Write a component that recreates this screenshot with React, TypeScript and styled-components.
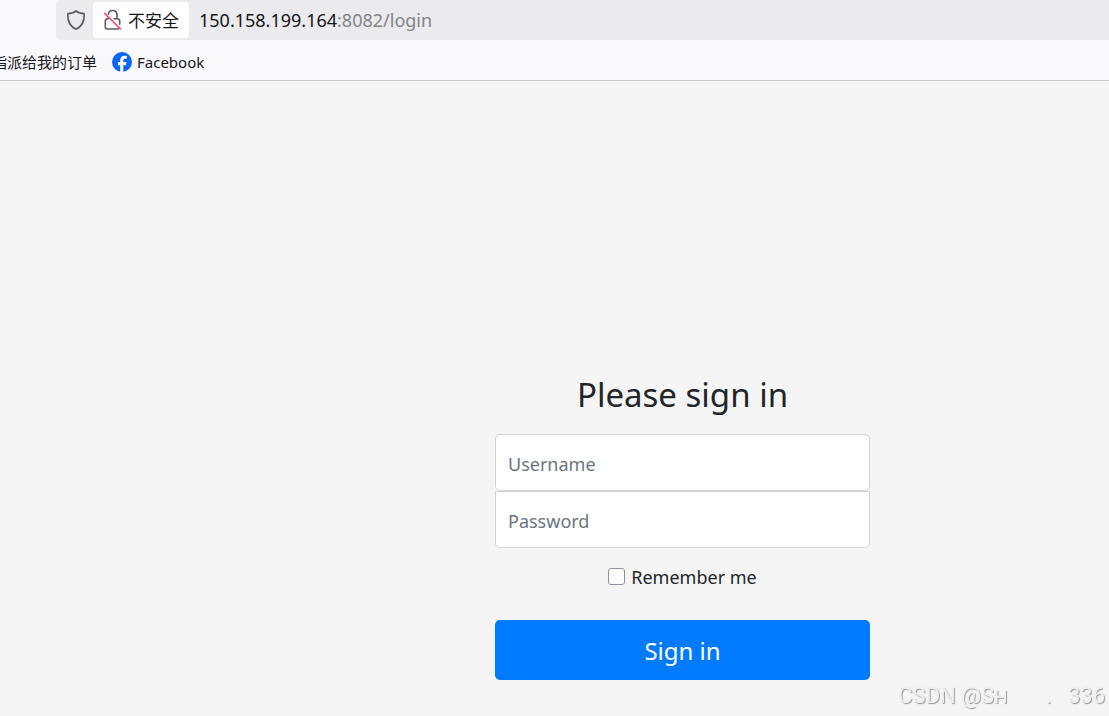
import React from "react";
import styled, { createGlobalStyle } from "styled-components";

const GlobalStyle = createGlobalStyle`
  *, *::before, *::after { box-sizing: border-box; }
  body {
    margin: 0;
    background: #f5f5f5;
    color: #212529;
    font-family: "Noto Sans", "Noto Sans CJK SC", sans-serif;
  }
`;

const Browser = styled.div`
  display: flex;
  flex-direction: column;
  min-height: 100vh;
  overflow: hidden;
`;

const Chrome = styled.header`
  background: #f9f9fb;
  border-bottom: 1px solid #cacaca;
  color: #15141a;
`;

const AddressBar = styled.div`
  display: flex;
  align-items: center;
  height: 40px;
  margin-left: 56px;
  padding-left: 10px;
  background: #ebebed;
  border-radius: 5px 0 0 5px;
`;

const SecurityButton = styled.button`
  display: flex;
  align-items: center;
  gap: 6px;
  height: 36px;
  margin-left: 7px;
  padding: 0 10px;
  border: 0;
  border-radius: 4px;
  background: #fff;
  color: #15141a;
  font: 17px/24px "Noto Sans CJK SC", sans-serif;
`;

const Address = styled.div`
  margin-left: 10px;
  font-size: 18px;
  line-height: 24px;
  white-space: nowrap;
`;

const AddressRest = styled.span`
  color: #848488;
`;

const Bookmarks = styled.nav`
  display: flex;
  align-items: center;
  gap: 15px;
  height: 40px;
  padding-top: 4px;
`;

const Bookmark = styled.a<{ $clipped?: boolean }>`
  display: flex;
  align-items: center;
  justify-content: flex-end;
  gap: 5px;
  width: ${(p) => (p.$clipped ? "97px" : "auto")};
  overflow: hidden;
  color: inherit;
  font-size: 15px;
  line-height: 22px;
  text-decoration: none;
  white-space: nowrap;
`;

const Page = styled.main`
  display: grid;
  grid-template-columns: 495fr 375px 239fr;
  padding: 290px 0 36px;
`;

const Form = styled.form`
  grid-column: 2;
  display: flex;
  flex-direction: column;
`;

const Title = styled.h1`
  margin: 0 0 15px;
  font-size: 33px;
  font-weight: 400;
  line-height: 48px;
  text-align: center;
`;

const Field = styled.input<{ $joined?: boolean }>`
  width: 100%;
  height: 57px;
  padding: 2px 12px 0;
  border: 1px solid #ced4da;
  border-radius: ${(p) => (p.$joined ? "0 0 5px 5px" : "5px")};
  background: #fff;
  color: #495057;
  font: inherit;
  font-size: 18px;

  &::placeholder {
    color: #6c757d;
    opacity: 1;
  }
`;

const Remember = styled.label`
  display: flex;
  align-items: center;
  justify-content: center;
  gap: 6px;
  margin: 14px 0 28px;
  font-size: 18px;
  line-height: 30px;
`;

const Checkbox = styled.input`
  appearance: none;
  width: 17px;
  height: 17px;
  margin: 0 0 2px;
  border: 1px solid #8f8f9d;
  border-radius: 3px;
  background: #fff;

  &:checked {
    background: #007bff;
  }
`;

const SubmitButton = styled.button`
  height: 60px;
  padding: 0;
  border: 0;
  border-radius: 5px;
  background: #007bff;
  color: #fff;
  font: inherit;
  font-size: 24px;
`;

const Watermark = styled.div`
  position: fixed;
  right: 4px;
  bottom: 6px;
  color: #f0f0f0;
  font: 22px/28px Roboto, sans-serif;
  font-variant: small-caps;
  text-shadow: 1px 1px 1px #999;
  white-space: pre;
`;

const ShieldIcon = () => (
  <svg width="20" height="22" viewBox="0 0 20 22" fill="none" stroke="#5b5b66" strokeWidth="1.7" strokeLinejoin="round" aria-hidden="true">
    <path d="M10 1.8C8.8 3 5 4.4 2.4 4.5Q1.8 4.6 1.8 5.2C1.6 11.8 3.6 17.3 10 20.2C16.4 17.3 18.4 11.8 18.2 5.2Q18.2 4.6 17.6 4.5C15 4.4 11.2 3 10 1.8Z" />
  </svg>
);

const InsecureIcon = () => (
  <svg width="19" height="22" viewBox="0 0 19 22" fill="none" strokeWidth="1.6" strokeLinecap="round" aria-hidden="true">
    <path d="M5.4 5.2C5.7 2.8 7.4 1.5 9.7 1.5C12.3 1.5 14 3.2 14 5.8V9.5M11 9.7H14.4Q16.7 9.7 16.7 12V15.2M5.4 9.7H5Q2.3 9.7 2.3 12.3V18Q2.3 20 4.3 20H14.3Q15.6 20 16.2 19.1M5.4 8.2V9.7" stroke="#5b5b66" />
    <path d="M1.7 4.3L17.5 20" stroke="#ff4f6e" strokeWidth="1.7" />
  </svg>
);

const FacebookIcon = () => (
  <svg width="20" height="20" viewBox="0 0 20 20" aria-hidden="true">
    <circle cx="10" cy="10" r="10" fill="#0866ff" />
    <path d="M8.2 20V13.2H6V10.1H8.2V8.6C8.2 5.2 9.8 3.7 12.9 3.7C13.5 3.7 14.4 3.8 14.8 3.9V6.7H13.2C11.8 6.7 11.3 7.3 11.3 8.7V10.1H14.5L13.9 13.2H11.3V20Z" fill="#fff" />
  </svg>
);

export default function App() {
  return (
    <Browser>
      <GlobalStyle />
      <Chrome>
        <AddressBar>
          <ShieldIcon />
          <SecurityButton type="button">
            <InsecureIcon />
            不安全
          </SecurityButton>
          <Address>
            150.158.199.164<AddressRest>:8082/login</AddressRest>
          </Address>
        </AddressBar>
        <Bookmarks>
          <Bookmark href="#orders" $clipped>指派给我的订单</Bookmark>
          <Bookmark href="#facebook">
            <FacebookIcon />
            Facebook
          </Bookmark>
        </Bookmarks>
      </Chrome>
      <Page>
        <Form onSubmit={(e) => e.preventDefault()}>
          <Title>Please sign in</Title>
          <Field type="text" name="username" placeholder="Username" aria-label="Username" />
          <Field type="password" name="password" placeholder="Password" aria-label="Password" $joined />
          <Remember>
            <Checkbox type="checkbox" name="remember-me" />
            Remember me
          </Remember>
          <SubmitButton type="submit">Sign in</SubmitButton>
        </Form>
      </Page>
      <Watermark>{"CSDN @Sh       .   336"}</Watermark>
    </Browser>
  );
}
